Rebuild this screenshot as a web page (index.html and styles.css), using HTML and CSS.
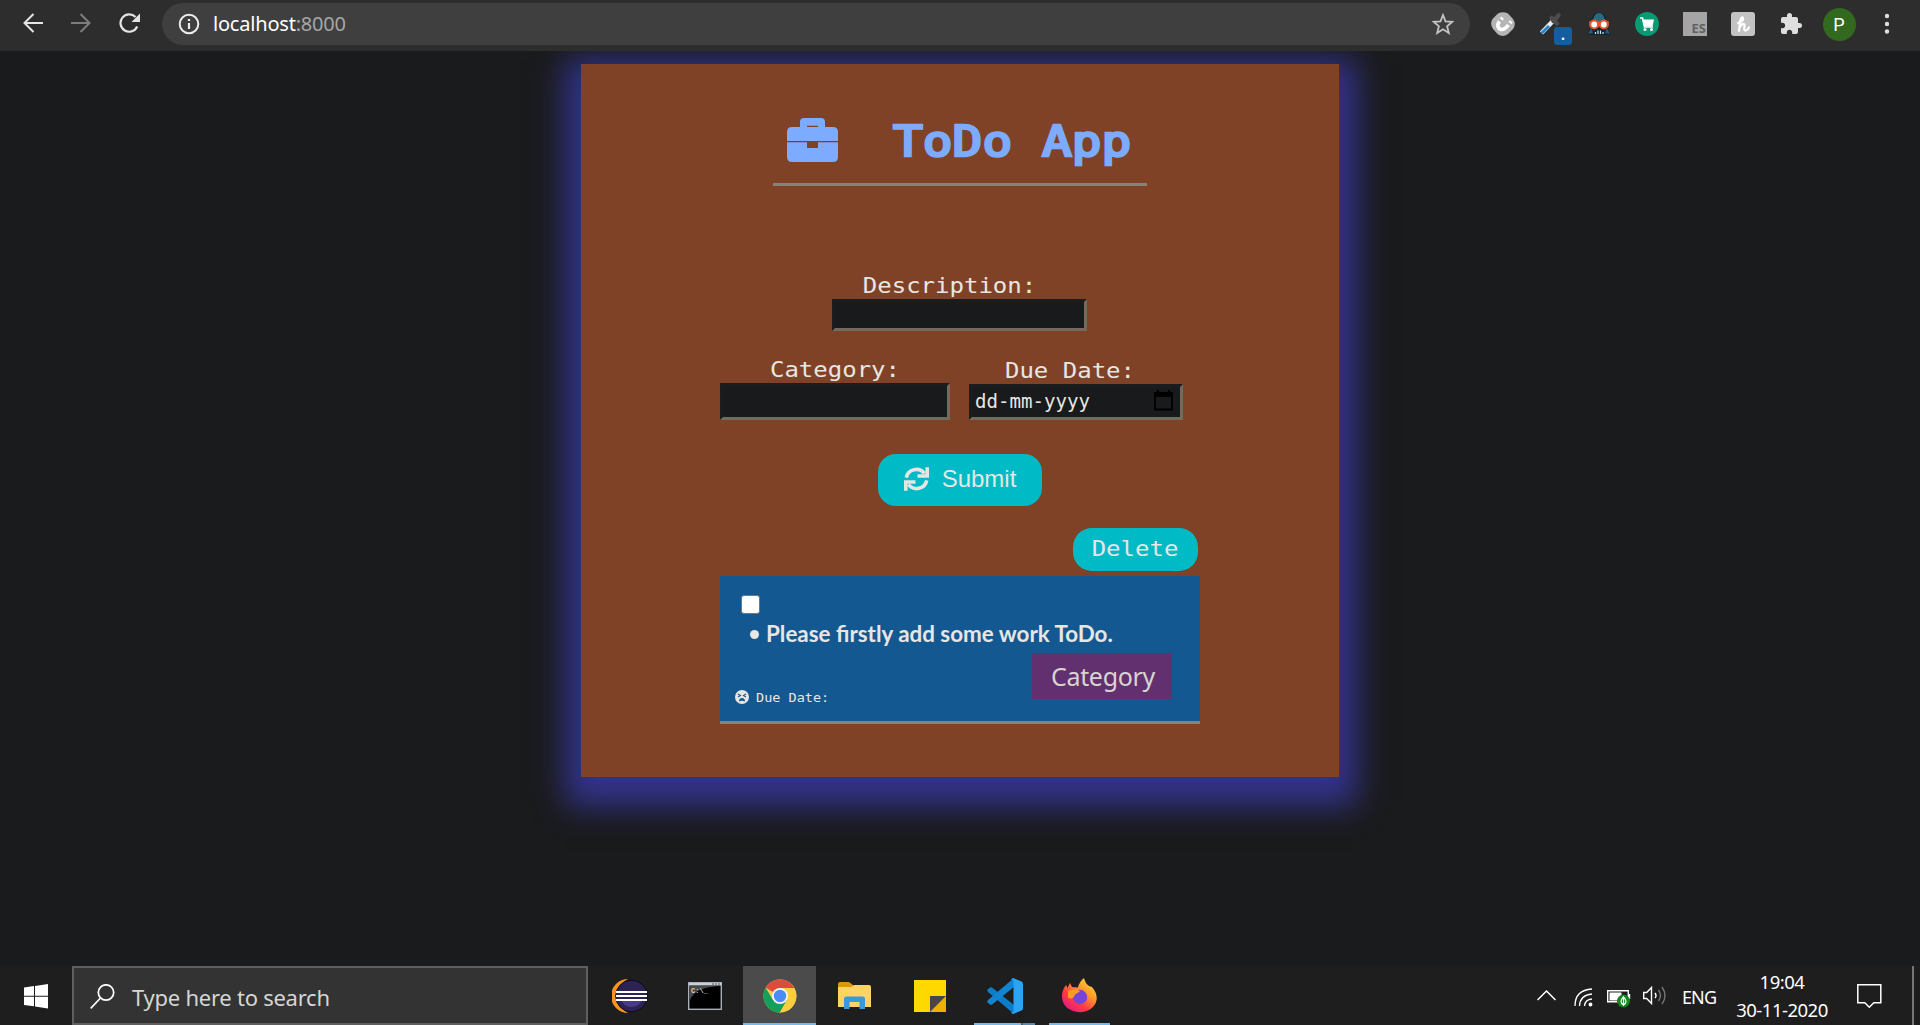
FILE: index.html
```html
<!DOCTYPE html>
<html lang="en">
<head>
<meta charset="utf-8">
<title>ToDo App</title>
<link rel="stylesheet" href="styles.css">
</head>
<body>
<header class="browser">
  <div class="nav">
    <svg width="20" height="20" viewBox="0 0 20 20" fill="none" stroke="#e4e4e4" stroke-width="2"><path d="M20 10H2M10.500 1L1.500 10l9 9"/></svg>
    <svg width="20" height="20" viewBox="0 0 20 20" fill="none" stroke="#7d7d7d" stroke-width="2"><path d="M0 10h18M9.500 1l9 9-9 9"/></svg>
    <svg width="22" height="20" viewBox="0 0 22 20" fill="none" stroke="#e4e4e4" stroke-width="2.200"><path d="M18.200 13.500A8.700 8.700 0 1 1 16.500 4"/><path d="M21 .5v8.500h-8.500z" fill="#e4e4e4" stroke="none"/></svg>
  </div>
  <div class="omnibox">
    <svg width="22" height="22" viewBox="0 0 22 22" fill="none" stroke="#ececec" stroke-width="2"><circle cx="11" cy="11" r="9.300"/><path d="M11 10v6M11 6v2" stroke-width="2.200"/></svg>
    <span class="url">localhost<span class="port">:8000</span></span>
    <svg class="star" width="22" height="22" viewBox="0 0 22 22" fill="none" stroke="#c4c4c4" stroke-width="1.800"><path d="M11 2l2.500 6.300 6.800.5-5.200 4.400 1.700 6.700L11 16.200 5.200 19.900l1.700-6.700L1.700 8.800l6.800-.5z"/></svg>
  </div>
  <div class="extensions">
    <span class="slot"><svg width="26" height="26" viewBox="0 0 26 26"><path d="M8 2.500Q13 0 18 2.500L23 8Q26.500 13 23 18L18 23Q13 26.500 8 23.500L3 18Q-.5 13 2.500 8z" fill="#b5b5b5"/><path d="M9.500 10.500C6 14.500 8.500 18.500 12 18.500c3 0 4.500-2 6.500-4.500" fill="none" stroke="#fff" stroke-width="3.600"/><path d="M11.200 8.300l1.300-1.600M20 12l1.200-1.600" stroke="#fff" stroke-width="3.600"/></svg></span>
    <span class="slot picker"><svg width="24" height="24" viewBox="0 0 24 24"><path d="M2.500 21L13.500 9.500" stroke="#e3edf3" stroke-width="4.500"/><path d="M2.500 21.300L10 14" stroke="#2b83c8" stroke-width="3"/><path d="M12.500 6l5.500 5.500M14.500 9l5-5.500" stroke="#4c4c4c" stroke-width="4.500" stroke-linecap="round"/></svg><span class="badge">.</span></span>
    <span class="slot"><svg width="26" height="26" viewBox="0 0 26 26"><path d="M1 24l4-10C5 6 8 1.500 13 1.500S21 6 21 14l4 10z" fill="#17232d"/><path d="M7 10q1-8 6-8t6 8l-4 1h-4z" fill="#286a82"/><path d="M2 23l3-6 2 5M24 23l-3-6-2 5" fill="#285e72"/><path d="M3 11.500h20" stroke="#e1572f" stroke-width="2"/><g fill="#fff" stroke="#e1572f" stroke-width="2.200"><circle cx="8.200" cy="13.500" r="4"/><circle cx="17.800" cy="13.500" r="4"/></g><path d="M9.500 21v2M12 19.500V23M14.500 19.500V23M17 21v2" stroke="#bdeaf2" stroke-width="1.200"/></svg></span>
    <span class="slot"><svg width="24" height="24" viewBox="0 0 24 24"><circle cx="12" cy="12" r="12" fill="#079b74"/><path d="M5 6h2.500l2 9H18" fill="none" stroke="#fff" stroke-width="1.600"/><path d="M7.500 7.500H19l-1.500 7H9z" fill="#fff"/><circle cx="10" cy="17.500" r="1.500" fill="#fff"/><circle cx="16.500" cy="17.500" r="1.500" fill="#fff"/></svg></span>
    <span class="slot"><span class="es">ES</span></span>
    <span class="slot"><svg width="24" height="24" viewBox="0 0 24 24"><rect width="24" height="24" rx="3" fill="#c3c3c3"/><path d="M7 11C10 10 13 8 12 6s-3 1-3 5l-1 8M9 15c2-4 5-4 4.500-1-.5 3-.5 5 1.500 4.500 1.500-.5 2.500-2 3-3" fill="none" stroke="#fff" stroke-width="2.200" stroke-linecap="round"/></svg></span>
    <span class="slot"><svg class="puzzle" width="24" height="24" viewBox="0 0 24 24" fill="#dedede"><path d="M20.500 11H19V7c0-1.100-.9-2-2-2h-4V3.500a2.500 2.500 0 0 0-5 0V5H4c-1.100 0-1.990.9-1.990 2v3.800H3.500c1.490 0 2.700 1.210 2.700 2.700s-1.210 2.700-2.700 2.700H2V20c0 1.100.9 2 2 2h3.800v-1.500c0-1.490 1.210-2.700 2.700-2.700s2.700 1.210 2.700 2.700V22H17c1.100 0 2-.9 2-2v-4h1.500a2.500 2.500 0 0 0 0-5z"/></svg></span>
    <span class="slot"><span class="avatar">P</span></span>
    <span class="slot"><svg width="6" height="22" viewBox="0 0 6 22" fill="#dedede"><circle cx="3" cy="3" r="2.200"/><circle cx="3" cy="11" r="2.200"/><circle cx="3" cy="18.500" r="2.200"/></svg></span>
  </div>
</header>

<main class="page">
  <section class="card">
    <h1 class="title">
      <svg width="51" height="44" viewBox="0 0 51 44" fill="#7cabff"><path fill-rule="evenodd" d="M13 9V4q0-4 4-4h17q4 0 4 4v5h8q5 0 5 5v9H0v-9q0-5 5-5zM20 7.800v1.200h11V7.800z"/><path d="M0 24.300h20V30h11v-5.700h20V39q0 5-5 5H5q-5 0-5-5z"/></svg>
      <span class="title-text">ToDo App</span>
    </h1>
    <form class="form">
      <label class="field description"><span class="label">Description:</span><span class="input"></span></label>
      <div class="row">
        <label class="field category"><span class="label">Category:</span><span class="input"></span></label>
        <label class="field due"><span class="label">Due Date:</span><span class="input"><span>dd-mm-yyyy</span><svg width="19" height="21" viewBox="0 0 19 21"><path d="M1 3h17v16.500H1z" fill="none" stroke="#000" stroke-width="1.800"/><path d="M0 2h19v5H0zM3 0h2v3H3zM14 0h2v3h-2z"/></svg></span></label>
      </div>
      <button type="button" class="submit"><svg width="25" height="24" viewBox="0 0 25 24" fill="none" stroke="#e8e6e3" stroke-width="3.600"><path d="M2.300 10.700A10.200 10 0 0 1 20.500 6.500M22.700 13.300A10.200 10 0 0 1 4.500 17.500"/><path d="M23.200.3v8.700h-9.700M1.800 23.700V15h9.700"/></svg>Submit</button>
    </form>
    <button type="button" class="delete"><span class="label">Delete</span></button>
    <article class="item">
      <span class="checkbox"></span>
      <p class="task"><span class="bullet"></span>Please firstly add some work ToDo.</p>
      <div class="meta">
        <span class="date"><svg width="14" height="14" viewBox="0 0 14 14"><circle cx="7" cy="7" r="7" fill="#e8e6e3"/><path d="M3 4l2.500 1.500L3 7M11 4L8.500 5.500 11 7" fill="none" stroke="#145891" stroke-width="1.100"/><path d="M4 11.500q0-3.500 3-3.500t3 3.500q-3-1.500-6 0z" fill="#145891"/></svg><span class="small">Due Date:</span></span>
        <span class="tag">Category</span>
      </div>
    </article>
  </section>
</main>

<footer class="taskbar">
  <div class="start"><svg width="24" height="25" viewBox="0 0 24 25" fill="#fff"><path d="M0 3.600l10-1.500v9.600H0zM11 2l13-2v11.700H11zM0 12.700h10v9.600L0 21zM11 12.700h13V24.500l-13-2z"/></svg></div>
  <div class="search"><svg width="25" height="25" viewBox="0 0 25 25" fill="none" stroke="#fff" stroke-width="1.700"><circle cx="16" cy="8.500" r="7.700"/><path d="M10.500 14L.7 24.300"/></svg><span>Type here to search</span></div>
  <div class="apps">
    <span class="app"><svg width="36" height="34" viewBox="0 0 36 34"><path d="M16 0A17 17 0 0 0 16 34 19 19 0 0 1 16 0z" fill="#f7941e"/><circle cx="19.500" cy="17" r="15.800" fill="#2c2255" stroke="#0d0b18"/><path d="M9 21h21q-3 7-10.500 7T9 21z" fill="#4a3a86"/><path d="M4 13h31M4 17h31M4 21h31" stroke="#fff" stroke-width="2"/></svg></span>
    <span class="app"><svg width="34" height="28" viewBox="0 0 34 28"><rect x=".7" y=".7" width="32.600" height="26.600" fill="#000" stroke="#a9b0ba" stroke-width="1.400"/><path d="M1 1h32v2.500H1z" fill="#c8d0d8"/><path d="M2 4h30Q7 5 2 18z" fill="#494949"/><path d="M24 2h2M27 2h2M30 2h2" stroke="#555"/><text x="3" y="11" class="prompt">C:\_</text></svg></span>
    <span class="app active"><svg width="34" height="34" viewBox="0 0 34 34"><circle cx="17" cy="17" r="16.500" fill="#ffcd40"/><path d="M17 17L2.700 8.700A16.500 16.500 0 0 1 31.300 9H17z" fill="#dd4b3e"/><path d="M2.700 8.700A16.500 16.500 0 0 0 17 33.500L24 21l-14 0z" fill="#13a05a"/><path d="M24 21l-7.200 12.500A16.500 16.500 0 0 0 31.300 9H17z" fill="#ffcd40"/><circle cx="17" cy="17" r="8" fill="#f4f4f4"/><circle cx="17" cy="17" r="6.200" fill="#4b8bf5"/></svg></span>
    <span class="app"><svg width="33" height="28" viewBox="0 0 33 28"><path d="M0 2q0-2 2-2h9l4 3v5H0z" fill="#d99a04"/><path d="M0 5h13l3-2h15q2 0 2 2v20H0z" fill="#fdd365"/><path d="M6 27V17q0-2.500 2.500-2.500h16q2.500 0 2.500 2.500v10h-5.500v-7h-10v7z" fill="#3898e0"/></svg></span>
    <span class="app"><svg width="32" height="32" viewBox="0 0 32 32"><path d="M0 0h32v32H0z" fill="#ffd800"/><path d="M32 16v16H16z" fill="#f0b000"/><path d="M16 32V16h16z" fill="#474747"/></svg></span>
    <span class="app open split"><svg width="36" height="36" viewBox="0 0 36 36"><path d="M0 12l3-2.500q1-.5 2 0L27 27v9L1 14z" fill="#0c7dc9"/><path d="M0 24l3 2.500q1 .5 2 0L27 9V0L1 22z" fill="#1285d2"/><path d="M26 0l8.500 3.500Q36 4 36 6v24q0 2-1.500 2.500L26 36q-1 0-2-2 2.500 1 2.500-1V3q0-2-2.500-1 1-2 2-2z" fill="#29a5f5"/></svg></span>
    <span class="app open"><svg width="35" height="35" viewBox="0 0 35 35"><defs><linearGradient id="fire" x1="1" y1="0" x2=".2" y2="1"><stop offset="0" stop-color="#fff044"/><stop offset=".4" stop-color="#ff9a28"/><stop offset=".7" stop-color="#ff3b45"/><stop offset="1" stop-color="#e31587"/></linearGradient></defs><path d="M4 7l1.500 3L8 5l2 4 6 .5Q17 4 22 0q1 5 5 8l3 1q9 11 1 20Q24 36 13 33.500 0 30 0 18 0 12 4 7z" fill="url(#fire)"/><circle cx="18" cy="19" r="7.200" fill="#7744d8"/><path d="M6 13l9-2.500 3 3-5 3q-2 6-7 3z" fill="#ff9b24"/></svg></span>
  </div>
  <div class="tray">
    <svg class="chevron" width="19" height="11" viewBox="0 0 19 11" fill="none" stroke="#fff" stroke-width="1.500"><path d="M.5 10l9-9 9 9"/></svg>
    <svg class="wifi" width="19" height="19" viewBox="0 0 19 19" fill="none" stroke="#fff" stroke-width="1.300"><path d="M1 18Q1 2 18 1M5.500 18Q6 7 18 6M10.500 18q.5-6.500 7.500-7"/><circle cx="16.500" cy="16.500" r="1.300" fill="#fff"/></svg>
    <svg class="battery" width="24" height="19" viewBox="0 0 24 19"><path d="M.7 1.700h20.600v11H.7zM22.500 5v5" fill="none" stroke="#fff" stroke-width="1.400"/><path d="M2.500 3.500h12v8h-12z" fill="#fff"/><circle cx="16.500" cy="12" r="6.500" fill="#10871a"/><path d="M16.500 8q-5 5 0 8 5-3 0-8v9" fill="none" stroke="#fff" stroke-width="1.200"/></svg>
    <svg class="speaker" width="23" height="19" viewBox="0 0 23 19" fill="none" stroke="#fff" stroke-width="1.400"><path d="M.7 6.500h3L8.500 1.500v16l-4.800-5h-3z"/><path d="M12 7q2 2.500 0 5"/><path d="M15.500 4q4 5.500 0 11M19 1q6 8.500 0 17" stroke="#777"/></svg>
    <span class="lang">ENG</span>
    <span class="clock"><span>19:04</span><span>30-11-2020</span></span>
    <svg class="notify" width="25" height="25" viewBox="0 0 25 25" fill="none" stroke="#fff" stroke-width="1.500"><path d="M.8.8h23v18h-7l-4.500 4.500L7.800 18.800h-7z"/></svg>
    <span class="peek"></span>
  </div>
</footer>
</body>
</html>
```
FILE: styles.css
```css
* { box-sizing: border-box; }
body {
  margin: 0;
  width: 1920px;
  height: 1025px;
  display: flex;
  flex-direction: column;
  overflow: hidden;
  background: #1a1b1c;
  color: #e8e6e3;
  font-family: "Noto Sans", sans-serif;
}
svg { display: block; flex: none; }

/* browser toolbar */
.browser {
  height: 51px;
  flex: none;
  display: flex;
  background: #2d2d2d;
  position: relative;
  z-index: 1;
}
.nav { width: 162px; padding: 13px 0 0 23px; display: flex; gap: 28px; }
.omnibox {
  width: 1308px;
  height: 42px;
  margin-top: 3px;
  padding: 0 16px 0 16px;
  border-radius: 21px;
  background: #3f3f3f;
  display: flex;
  align-items: center;
}
.url { margin-left: 13px; font-size: 20px; line-height: 42px; color: #fff; letter-spacing: -0.2px; }
.port { color: #a6a6a6; }
.star { margin-left: auto; }
.extensions { display: flex; margin-left: 9px; }
.slot { width: 48px; height: 48px; display: flex; align-items: center; justify-content: center; position: relative; }
.badge {
  position: absolute;
  left: 27px;
  top: 27px;
  width: 18px;
  height: 18px;
  border-radius: 3px;
  background: #125e9f;
  color: #fff;
  font: bold 14px/16px "Noto Sans", sans-serif;
  text-align: center;
}
.es {
  width: 24px;
  height: 24px;
  padding: 9px 1px 0 0;
  background: #a5a5a5;
  color: #626262;
  font: bold 13px/15px "Noto Sans", sans-serif;
  text-align: right;
}
.avatar {
  width: 33px;
  height: 33px;
  border-radius: 50%;
  background: #32691e;
  color: #fff;
  font: 18px/33px Roboto, sans-serif;
  text-align: center;
}

/* page */
.page { flex: 1; padding: 13px 0 0 581px; overflow: hidden; }
.card {
  width: 758px;
  height: 713px;
  padding: 54px 139px 0;
  display: flex;
  flex-direction: column;
  background: #7f4226;
  box-shadow: 1px 12px 30px 17px #33338c;
}
.title {
  width: 374px;
  height: 68px;
  margin: 0 auto;
  padding-left: 14px;
  display: flex;
  border-bottom: 3px solid #8c8273;
}
.title-text {
  margin: 2px 0 0 55px;
  height: 44px;
  font: 49.500px/44px "DejaVu Sans Mono", monospace;
  white-space: pre;
  color: #7cabff;
  -webkit-text-stroke: 3px #7cabff;
  transform: scaleY(0.85);
}
.form { display: flex; flex-direction: column; align-items: center; margin-top: 83px; }
.field { display: flex; flex-direction: column; align-items: center; }
.label {
  font: 24px/30px "DejaVu Sans Mono", monospace;
  transform: scaleY(0.85);
  white-space: pre;
}
.field .label { height: 30px; line-height: 35px; }
.input {
  display: flex;
  border: 3px solid;
  border-color: #1b1c1b #736b5e #736b5e #1b1c1b;
  background: #181a1b;
}
.description { margin-right: 1px; }
.description .input { width: 255px; height: 32px; }
.description .label { margin-right: 20px; }
.row { width: 480px; display: flex; align-items: flex-end; gap: 19px; margin-top: 22px; }
.category .input { width: 230px; height: 37px; }
.due .input { width: 214px; height: 36px; padding: 3px 7px 0 3px; justify-content: space-between; font: 19.100px/24px "DejaVu Sans Mono", monospace; }
.due .label { margin-right: 12px; }
.submit {
  width: 164px;
  height: 52px;
  margin-top: 34px;
  padding: 0 0 2px;
  border: 0;
  border-radius: 18px;
  background: #00bbc6;
  color: #e8e6e3;
  display: flex;
  align-items: center;
  justify-content: center;
  gap: 13px;
  font: 24px "Liberation Sans", sans-serif;
}
.delete {
  width: 125px;
  height: 43px;
  margin: 22px 2px 0 auto;
  padding: 0 1px 2px 0;
  border: 0;
  border-radius: 19px;
  background: #00bbc6;
  color: #e8e6e3;
  display: flex;
  align-items: center;
  justify-content: center;
}
.item {
  width: 480px;
  height: 148px;
  margin-top: 5px;
  padding: 19px 28px 0 15px;
  background: #145891;
  border-bottom: 3px solid #8c8273;
}
.checkbox { display: block; width: 19px; height: 19px; margin-left: 6px; border: 1px solid #767676; border-radius: 3px; background: #fff; }
.task {
  margin: 5px 0 1px 15px;
  display: flex;
  align-items: center;
  font: bold 22.400px/30px Lato, sans-serif;
  white-space: nowrap;
}
.bullet { width: 9px; height: 9px; margin-right: 7px; border-radius: 50%; background: #e8e6e3; }
.meta { display: flex; justify-content: space-between; margin-top: 4px; }
.date { display: flex; margin-top: 37px; }
.small { margin-left: 7px; font: 13.500px/16px "DejaVu Sans Mono", monospace; transform: scaleY(0.9); height: 15px; }
.tag {
  width: 140px;
  height: 46px;
  padding-left: 2px;
  background: #62306f;
  color: #d8d4cf;
  font-size: 25px;
  line-height: 47px;
  text-align: center;
  letter-spacing: -0.3px;
}

/* taskbar */
.taskbar { height: 59px; flex: none; display: flex; background: #1e1e1e; position: relative; z-index: 1; }
.start { width: 72px; padding: 18px 0 0 24px; }
.search {
  width: 516px;
  padding: 16px 0 0 16px;
  border: 2px solid #5f5f5f;
  background: #333;
  display: flex;
}
.search span { margin: -2px 0 0 17px; font-size: 22px; line-height: 30px; color: #d6d6d6; white-space: nowrap; letter-spacing: -0.250px; }
.apps { display: flex; gap: 2px; margin-left: 5px; }
.app { width: 73px; height: 59px; display: flex; align-items: center; justify-content: center; border-bottom: 2px solid transparent; border-top: 2px solid transparent; }
.active { background: #4b4b4b; border-top-color: #4b4b4b; border-bottom-color: #76b9ed; }
.open { width: 61px; margin: 0 6px; border-bottom-color: #76b9ed; }
.split { border-image: linear-gradient(90deg, #76b9ed 47px, #41617b 47px, #41617b 49px, #5a89ae 49px) 0 0 2 0; }
.prompt { font: bold 7px "Liberation Mono", monospace; fill: #d0d0d0; }
.tray { margin-left: auto; display: flex; width: 383px; }
.chevron { margin-top: 24px; }
.wifi { margin: 22px 0 0 18px; }
.battery { margin: 23px 0 0 14px; }
.speaker { margin: 20px 0 0 12px; }
.lang { margin: 18px 0 0 16px; width: 36px; font-size: 18px; line-height: 26px; color: #fff; letter-spacing: -0.9px; }
.clock { width: 110px; margin: 2px 0 0 9px; display: flex; flex-direction: column; align-items: center; font-size: 18.500px; line-height: 28px; color: #fff; letter-spacing: -0.500px; }
.notify { margin: 18px 0 0 20px; }
.peek { width: 2px; height: 59px; margin-left: 30px; background: #777; }
```
